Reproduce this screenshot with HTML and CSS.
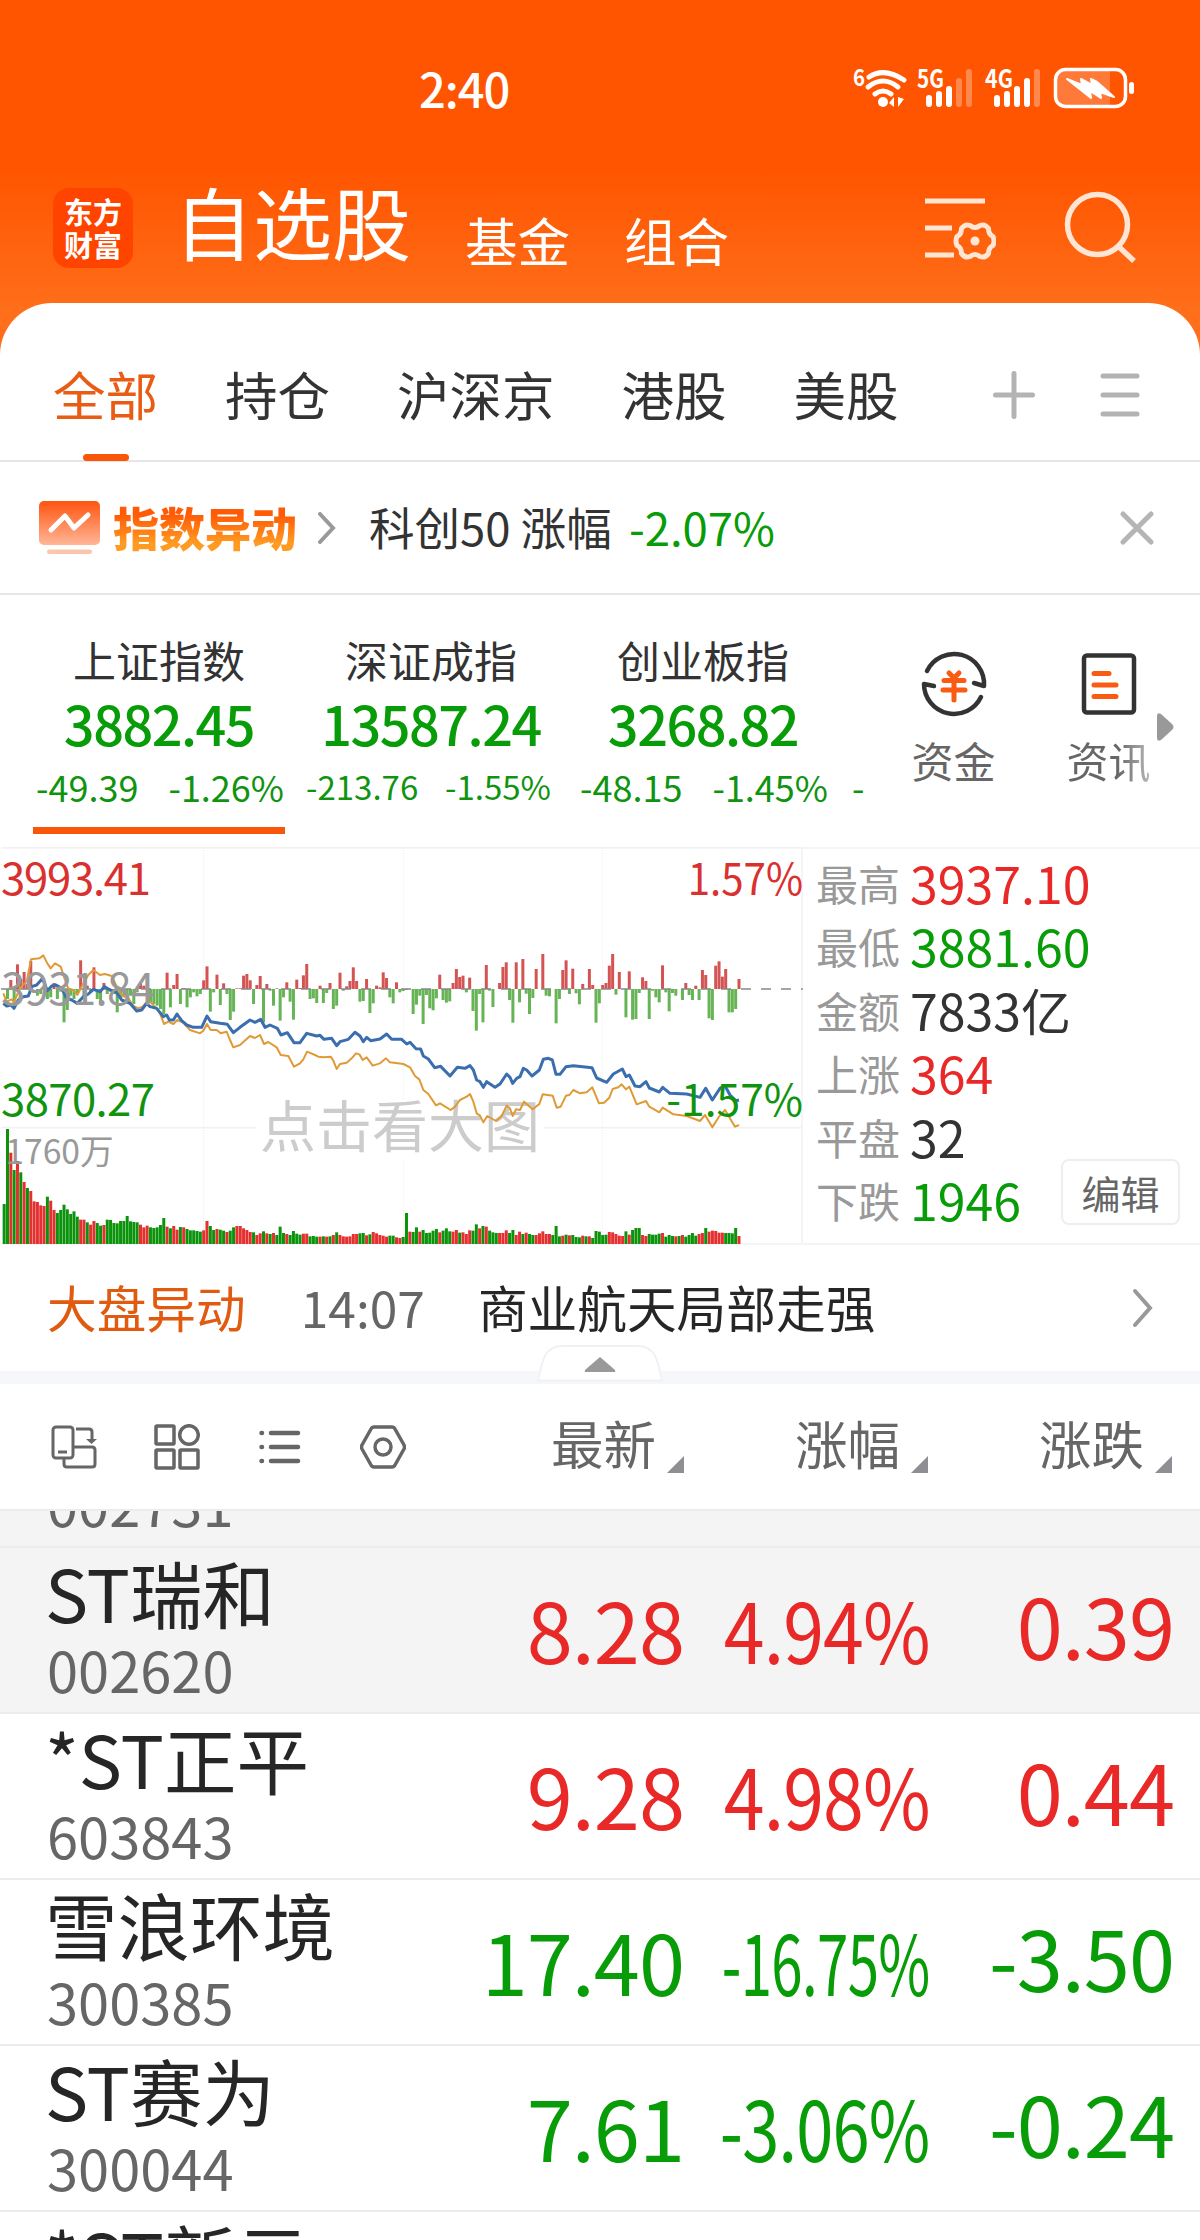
FILE: index.html
```
<!DOCTYPE html>
<html lang="zh-CN">
<head>
  <meta charset="UTF-8" />
  <meta name="viewport" content="width=device-width, initial-scale=1.0" />
  <title>自选股</title>
  <link rel="stylesheet" href="styles.css">
</head>
<body>
  <div class="app">
    <header class="top">
      <div class="status-bar">
        <span class="time">2:40</span>
        <svg class="status-icons" width="290" height="56" viewBox="850 60 290 56">
          <g fill="#fff" font-size="25" font-weight="700">
            <text x="853" y="86" font-size="23" textLength="12" lengthAdjust="spacingAndGlyphs">6</text>
            <text x="917" y="88" textLength="27" lengthAdjust="spacingAndGlyphs">5G</text>
            <text x="985" y="88" textLength="28" lengthAdjust="spacingAndGlyphs">4G</text>
          </g>
          <g fill="none" stroke="#fff" stroke-width="5" stroke-linecap="round">
            <path d="M869 77q15-10 35 3" />
            <path d="M868 87q15-12 30 0" />
            <path d="M875 94q8-6 16 0" />
          </g>
          <circle cx="883" cy="102" r="5" fill="#fff" />
          <path d="M894 97v10l-5-4zM898 97v10l6-8z" fill="#fff" />
          <g stroke="#fff" stroke-width="6" stroke-linecap="round">
            <path d="M929 98v6M939 94v10M949 89v15M997 98v6M1007 94v10M1017 89v15M1027 81v23" />
            <path d="M959 81v23M969 72v32M1037 72v32" opacity=".3" />
          </g>
          <path d="M1062 71h48v35h-48q-6 0-6-6v-23q0-6 6-6z" fill="#fff" opacity=".22" />
          <rect x="1055.500" y="69.500" width="70" height="37" rx="10" fill="none" stroke="#fff" stroke-width="3.500" />
          <rect x="1129" y="82" width="5" height="12" rx="2.500" fill="#fff" />
          <path d="M1067 79l15 6-1-6 11 6-1-6 6 3 17 15-14-5 1 6-11-7 1 7z" fill="#fff" stroke="#fff" stroke-width="2" stroke-linejoin="round" />
        </svg>
      </div>
      <div class="nav">
        <div class="logo">东方<br>财富</div>
        <h1 class="nav-main">自选股</h1>
        <span class="nav-link">基金</span>
        <span class="nav-link">组合</span>
        <svg class="nav-icon" width="76" height="70" viewBox="920 192 76 70">
          <g fill="none" stroke="#ffe5d3" stroke-width="5">
            <path d="M925 201h60M925 228h27M925 255h29" />
            <path d="M970 225.500q5 4 10 0q5-2 8.500 3q0 6 4.500 8q2 4.500 0 9q-4.500 2-4.500 8q-3.500 5-8.500 3q-5-4-10 0q-5 2-8.500-3q0-6-4.500-8q-2-4.500 0-9q4.500-2 4.500-8q3.500-5 8.500-3z" stroke-linejoin="round" />
          </g>
          <circle cx="975" cy="241" r="4.500" fill="#ffe5d3" />
        </svg>
        <svg class="nav-icon search" width="76" height="74" viewBox="1062 190 76 74">
          <g fill="none" stroke="#ffe5d3" stroke-width="5.500">
            <circle cx="1097.500" cy="224.500" r="30" />
            <path d="M1118 246l16 15" />
          </g>
        </svg>
      </div>
    </header>

    <main class="sheet">
      <nav class="tabs">
        <span class="tab active">全部</span>
        <span class="tab">持仓</span>
        <span class="tab">沪深京</span>
        <span class="tab">港股</span>
        <span class="tab">美股</span>
        <svg class="tab-plus" width="42" height="48" viewBox="0 0 42 48">
          <path d="M2.500 24h37M21 2.500v43" stroke="#b3b3b3" stroke-width="5" stroke-linecap="round" />
        </svg>
        <svg class="tab-menu" width="40" height="48" viewBox="0 0 40 48">
          <path d="M3 5h34M3 24h34M3 43h34" stroke="#b3b3b3" stroke-width="5" stroke-linecap="round" />
        </svg>
      </nav>

      <div class="alert">
        <svg width="62" height="54" viewBox="0 0 62 54">
          <defs>
            <linearGradient id="alert-bg" x1="0" y1="0" x2="0" y2="1">
              <stop offset="0" stop-color="#ff5410" />
              <stop offset="1" stop-color="#ffb697" />
            </linearGradient>
          </defs>
          <rect x="0" y="0" width="61" height="44" rx="5" fill="url(#alert-bg)" />
          <rect x="8" y="48.500" width="45" height="4.500" rx="2.200" fill="#fcc6ae" />
          <path d="M12 29l14-14 9 12 14-13" fill="none" stroke="#fff" stroke-width="5" stroke-linecap="round" stroke-linejoin="round" />
        </svg>
        <b class="alert-title">指数异动</b>
        <svg class="alert-arrow" width="18" height="32" viewBox="0 0 18 32">
          <path d="M2 2l13 14L2 30" fill="none" stroke="#999" stroke-width="4" stroke-linecap="round" />
        </svg>
        <span class="alert-text">科创50 涨幅 <i class="down">-2.07%</i></span>
        <svg class="alert-close" width="34" height="34" viewBox="0 0 34 34">
          <path d="M3 3l28 28M31 3L3 31" stroke="#b5b5b5" stroke-width="5" stroke-linecap="round" />
        </svg>
      </div>

      <section class="indices">
        <div class="cards">
          <div class="card active">
            <p class="card-name">上证指数</p>
            <p class="card-value">3882.45</p>
            <p class="card-change"><span>-49.39</span><span>-1.26%</span></p>
          </div>
          <div class="card">
            <p class="card-name">深证成指</p>
            <p class="card-value">13587.24</p>
            <p class="card-change small"><span>-213.76</span><span>-1.55%</span></p>
          </div>
          <div class="card">
            <p class="card-name">创业板指</p>
            <p class="card-value">3268.82</p>
            <p class="card-change"><span>-48.15</span><span>-1.45%</span></p>
          </div>
          <div class="card">
            <p class="card-name">&nbsp;</p>
            <p class="card-value">&nbsp;</p>
            <p class="card-change"><span>-</span></p>
          </div>
        </div>
        <div class="shortcut">
          <svg width="68" height="70" viewBox="0 0 68 70">
            <g fill="none" stroke="#333" stroke-width="4.500" stroke-linecap="round" stroke-linejoin="round">
              <path d="M7 22A30 30 0 0 1 64 37L54 34" />
              <path d="M61 48A30 30 0 0 1 4 35L14 37" />
            </g>
            <path d="M29 24l5 5 5-5M24 31.500h20M23 41h22M34 31v20" fill="none" stroke="#f95b12" stroke-width="5" stroke-linecap="round" />
          </svg>
          <span>资金</span>
        </div>
        <div class="shortcut">
          <svg width="56" height="70" viewBox="0 0 56 70">
            <rect x="3" y="6.500" width="50" height="57" rx="3" fill="none" stroke="#333" stroke-width="4.500" />
            <path d="M13 24.500h15M13 36h22M13 47.500h22" stroke="#f95b12" stroke-width="5" stroke-linecap="round" />
          </svg>
          <span class="fade">资讯</span>
        </div>
        <svg class="more" width="17" height="28" viewBox="0 0 17 28">
          <path d="M0 3q0-4 4-2l11 10q3 3 0 6L4 27q-4 2-4-2z" fill="#999" />
        </svg>
      </section>

      <section class="market">
        <svg class="chart" width="803" height="398" viewBox="0 21 2409 1194">
          <g class="grid">
            <path d="M4 23.500H2409M4 863H2406M4 1212H2406M2406 23V1212" stroke="#f2f2f2" stroke-width="5" />
            <path d="M611 30V1210M1210 30V1210M1807 30V1210" stroke="#e9e9e9" stroke-width="3" stroke-dasharray="3 5" />
          </g>
          <rect x="768" y="780" width="864" height="180" fill="#fff" />
          <text class="watermark" x="780" y="921">点击看大图</text>
          <g id="momentum"></g>
          <path d="M3 447H2409" stroke="#888" stroke-width="5" stroke-dasharray="30 30" />
          <g id="volume"></g>
          <polyline id="avg-line" />
          <polyline id="price-line" />
          <text class="mid" x="3" y="496" textLength="462">3931.84</text>
          <text class="up" x="3" y="165" textLength="450">3993.41</text>
          <text class="up" x="2063" y="165" textLength="346" lengthAdjust="spacingAndGlyphs">1.57%</text>
          <text class="down" x="3" y="828" textLength="462">3870.27</text>
          <text class="down" x="1999" y="828" textLength="410" lengthAdjust="spacingAndGlyphs">-1.57%</text>
          <text class="vol" x="16" y="972">1760万</text>
        </svg>
        <div class="stats">
          <p><label>最高</label><span class="up">3937.10</span></p>
          <p><label>最低</label><span class="down">3881.60</span></p>
          <p><label>金额</label><span>7833亿</span></p>
          <p><label>上涨</label><span class="up">364</span></p>
          <p><label>平盘</label><span>32</span></p>
          <p><label>下跌</label><span class="down">1946</span></p>
          <button class="edit">编辑</button>
        </div>
      </section>

      <div class="news">
        <span class="news-tag">大盘异动</span>
        <span class="news-time">14:07</span>
        <span class="news-title">商业航天局部走强</span>
        <svg class="news-arrow" width="22" height="40" viewBox="0 0 22 40">
          <path d="M3 3l15 17L3 37" fill="none" stroke="#999" stroke-width="4" stroke-linecap="round" />
        </svg>
        <svg class="handle" width="128" height="38" viewBox="0 0 128 38">
          <path d="M2 36.500C6 18 8 2 26 2H102C120 2 122 18 126 36.500z" fill="#fff" stroke="#f0f1f3" stroke-width="2" />
          <path d="M64 13L79 26q1 2-1 2H50q-2 0-1-2z" fill="#999" />
        </svg>
      </div>

      <div class="list-head">
        <div class="tools">
          <svg width="46" height="46" viewBox="0 0 46 46" fill="none" stroke="#666" stroke-width="3">
            <rect x="2" y="3" width="20" height="31" rx="3" />
            <path d="M7 28h9M13 35v5q0 3 3 3h25q3 0 3-3V26q0-3-3-3H23M25 5h13q3 0 3 3v9" />
            <path d="M35 15h11l-5.500 5z" fill="#666" stroke="none" />
          </svg>
          <svg width="46" height="46" viewBox="0 0 46 46" fill="none" stroke="#666" stroke-width="3.500">
            <rect x="2" y="2" width="18" height="18" rx="1" />
            <circle cx="35" cy="11" r="9.300" />
            <rect x="2" y="26" width="18" height="18" rx="1" />
            <rect x="26" y="26" width="18" height="18" rx="1" />
          </svg>
          <svg width="46" height="46" viewBox="0 0 46 46" stroke="#666" stroke-width="4.500" stroke-linecap="round">
            <path d="M4.500 9h.5M4.500 23h.5M4.500 37h.5M14 9h27M14 23h27M14 37h27" />
          </svg>
          <svg width="46" height="46" viewBox="0 0 46 46" fill="none" stroke="#666" stroke-width="3.500" stroke-linejoin="round">
            <path d="M14 3h18q2 0 3 2l9 16q1 2 0 4l-9 16q-1 2-3 2H14q-2 0-3-2L2 25q-1-2 0-4l9-16q1-2 3-2z" />
            <circle cx="23" cy="23" r="8" />
          </svg>
        </div>
        <span class="sort">最新</span>
        <span class="sort">涨幅</span>
        <span class="sort">涨跌</span>
      </div>

      <div class="list">
        <div class="row pinned first">
          <div class="stock"><span class="name">ST萃华</span><span class="code">002731</span></div>
        </div>
        <div class="row pinned up">
          <div class="stock"><span class="name">ST瑞和</span><span class="code">002620</span></div>
          <span class="price">8.28</span>
          <span class="pct"><i>4.94%</i></span>
          <span class="diff">0.39</span>
        </div>
        <div class="row up">
          <div class="stock"><span class="name">*ST正平</span><span class="code">603843</span></div>
          <span class="price">9.28</span>
          <span class="pct"><i>4.98%</i></span>
          <span class="diff">0.44</span>
        </div>
        <div class="row down">
          <div class="stock"><span class="name">雪浪环境</span><span class="code">300385</span></div>
          <span class="price">17.40</span>
          <span class="pct tight"><i>-16.75%</i></span>
          <span class="diff">-3.50</span>
        </div>
        <div class="row down">
          <div class="stock"><span class="name">ST赛为</span><span class="code">300044</span></div>
          <span class="price">7.61</span>
          <span class="pct mid-tight"><i>-3.06%</i></span>
          <span class="diff">-0.24</span>
        </div>
        <div class="row">
          <div class="stock"><span class="name">*ST新元</span></div>
        </div>
      </div>
    </main>
  </div>
  <script src="chart.js"></script>
</body>
</html>
```
FILE: styles.css
```
* {
  margin: 0;
  padding: 0;
  box-sizing: border-box;
}
body {
  background: #fff;
  color: #333;
  font-family: "Noto Sans CJK SC", "Noto Sans", sans-serif;
}
i {
  font-style: normal;
}
svg {
  display: block;
  flex: none;
}
.app {
  width: 1200px;
  height: 2240px;
  overflow: hidden;
  background: linear-gradient(#ff5500 170px, #ff6e1a 310px);
}
.up {
  color: #e92828;
  fill: #d93030;
}
.down {
  color: #089c08;
  fill: #109410;
}

/* header */
.top {
  height: 303px;
  color: #fff;
}
.status-bar {
  display: flex;
  align-items: center;
  height: 176px;
  padding-left: 419px;
}
.time {
  width: 431px;
  font-size: 47px;
  font-weight: 500;
  letter-spacing: -1px;
  line-height: 56px;
  padding-bottom: 1px;
}
.nav {
  display: flex;
  align-items: flex-start;
  padding-left: 53px;
}
.logo {
  width: 80px;
  height: 80px;
  margin-top: 12px;
  padding-top: 7px;
  border-radius: 16px;
  background: #ff4400;
  font-size: 29px;
  font-weight: 700;
  line-height: 33px;
  text-align: center;
}
.nav-main {
  margin: -7px 0 0 41px;
  font-size: 79px;
  font-weight: 400;
  line-height: 104px;
}
.nav-link {
  margin: 31px 0 0 54px;
  font-size: 52.5px;
  line-height: 64px;
}
.nav-main + .nav-link {
  margin-left: 54px;
}
.nav-icon {
  margin: 16px 0 0 191px;
}
.search {
  margin: 14px 0 0 66px;
}

/* white panel */
.sheet {
  height: 1937px;
  border-radius: 52px 52px 0 0;
  background: #fff;
}
.tabs {
  display: flex;
  align-items: center;
  height: 159px;
  padding: 26px 0 0 53px;
  border-bottom: 2px solid #e6e6e6;
}
.tab {
  position: relative;
  margin-right: 67px;
  font-size: 52.5px;
  line-height: 131px;
  padding-bottom: 2px;
}
.tab.active {
  color: #e95c14;
}
.tab.active::after {
  content: "";
  position: absolute;
  left: 30px;
  bottom: 0;
  width: 46px;
  height: 7px;
  border-radius: 4px;
  background: #fa560a;
}
.tab-plus {
  margin-left: 27px;
}
.tab-menu {
  margin-left: 65px;
}
.alert {
  display: flex;
  align-items: center;
  height: 133px;
  padding: 0 46px 0 39px;
  border-bottom: 2px solid #e6e6e6;
}
.alert-title {
  margin-left: 12px;
  padding-bottom: 4px;
  background: linear-gradient(#ff5a05 30%, #ff9a22 72%);
  -webkit-background-clip: text;
  background-clip: text;
  color: transparent;
  font-size: 46px;
  font-weight: 900;
  line-height: 64px;
}
.alert-arrow {
  margin-left: 21px;
}
.alert-text {
  margin-left: 33px;
  padding-bottom: 4px;
  font-size: 45.5px;
  line-height: 60px;
}
.alert-text i {
  margin-left: 7px;
}
.alert-close {
  margin-left: auto;
}

/* index cards */
.indices {
  display: flex;
  height: 252px;
  padding-left: 23px;
}
.cards {
  display: flex;
  width: 843px;
  overflow: hidden;
}
.card {
  flex: 0 0 272px;
  height: 239px;
  padding: 34px 10px 0;
  text-align: center;
}
.card.active {
  background: linear-gradient(#fa560a, #fa560a) 10px 100% / 252px 7px no-repeat;
}
.card-name {
  font-size: 43px;
  line-height: 60px;
}
.card-value {
  color: #089c08;
  font-size: 54px;
  font-weight: 500;
  letter-spacing: -1.5px;
  line-height: 68px;
  white-space: nowrap;
}
.card-change {
  display: flex;
  justify-content: space-between;
  padding: 0 1px 0 3px;
  color: #109410;
  font-size: 36px;
  line-height: 58px;
}
.card-change.small {
  padding: 0 6px 0 1px;
  font-size: 33px;
}
.shortcut {
  display: flex;
  flex-direction: column;
  align-items: center;
  width: 155px;
  padding-top: 54px;
  color: #666;
  font-size: 42px;
  line-height: 60px;
}
.cards + .shortcut {
  margin-left: 10px;
}
.shortcut span {
  margin-top: 11px;
}
.fade {
  background: linear-gradient(90deg, #666 60%, #bbb);
  -webkit-background-clip: text;
  background-clip: text;
  color: transparent;
}
.more {
  margin: 118px 0 0 -29px;
}

/* minute chart and side figures */
.market {
  display: flex;
  height: 398px;
}
.chart text {
  font-size: 131px;
}
.chart .mid,
.chart .vol {
  fill: #999;
}
.chart .vol {
  font-size: 101px;
}
.chart .watermark {
  fill: #ccc;
  font-size: 168px;
}
#price-line,
#avg-line {
  fill: none;
  stroke: #3a6eae;
  stroke-width: 9;
  stroke-linejoin: round;
}
#avg-line {
  stroke: #e09a35;
  stroke-width: 6;
}
.stats {
  position: relative;
  flex: 1;
  padding: 2px 0 0 13px;
  border-top: 2px solid #f4f4f4;
  border-bottom: 2px solid #f4f4f4;
}
.stats p {
  display: flex;
  height: 63.4px;
  font-size: 50px;
  line-height: 63px;
}
.stats label {
  width: 94px;
  color: #999;
  font-size: 42px;
}
.edit {
  position: absolute;
  right: 20px;
  bottom: 18px;
  width: 119px;
  height: 66px;
  border: 2px solid #eee;
  border-radius: 8px;
  background: #fff;
  color: #666;
  font: 39px/58px "Noto Sans CJK SC", sans-serif;
}

/* news line */
.news {
  position: relative;
  display: flex;
  align-items: center;
  height: 139px;
  padding: 0 46px 4px 47px;
  border-bottom: 13px solid #f5f7fa;
  font-size: 49.7px;
  line-height: 70px;
}
.news-tag {
  color: #e05a10;
}
.news-time {
  margin-left: 55px;
  color: #666;
}
.news-title {
  margin-left: 53px;
  color: #262626;
}
.news-arrow {
  margin: 4px 0 0 auto;
}
.handle {
  position: absolute;
  left: 536px;
  bottom: -11px;
}

/* stock list */
.list-head,
.row {
  display: grid;
  grid-template-columns: 1fr 240px 244px 244px;
  padding: 0 26px 0 47px;
}
.list-head {
  height: 127px;
  align-items: center;
  border-bottom: 2px solid #ececec;
}
.tools {
  display: flex;
  gap: 57px;
  padding-left: 4px;
}
.sort {
  display: flex;
  justify-content: flex-end;
  color: #666;
  font-size: 52.5px;
  line-height: 70px;
  padding-bottom: 9px;
}
.sort::after {
  content: "";
  align-self: flex-end;
  margin: 0 2px 4px 11px;
  border-left: 17px solid transparent;
  border-bottom: 17px solid #8e8e93;
}
.list {
  height: 730px;
  overflow: hidden;
}
.row {
  height: 166px;
  border-bottom: 2px solid #ececec;
}
.row.first {
  margin-top: -129px;
}
.pinned {
  background: #f4f4f4;
}
.stock {
  display: flex;
  flex-direction: column;
  padding-top: 4px;
}
.name {
  margin-left: -2px;
  color: #262626;
  font-size: 72.5px;
  line-height: 80px;
  white-space: nowrap;
}
.code {
  color: #666;
  font-size: 56px;
  line-height: 74px;
}
.price,
.pct,
.diff {
  display: flex;
  justify-content: flex-end;
  padding-top: 30px;
  font-size: 83px;
  letter-spacing: -1px;
  line-height: 100px;
}
.price {
  padding-right: 2px;
}
.diff {
  padding-top: 26px;
}
.pct i {
  transform: scaleX(0.885);
  transform-origin: right;
}
.pct.mid-tight i {
  transform: scaleX(0.805);
}
.pct.tight i {
  transform: scaleX(0.68);
}
```
FILE: chart.js
```
const SVG = 'http://www.w3.org/2000/svg';
const STEP = 9.975;

// minute momentum, above / below the zero line
const momentum = [
  0, -30, 27, -40, 74, 30, 51, 15, 84, 0, -20, -15, 8, -30, -25, 18, -30, -8, -100, -63,
  -20, -30, -15, 86, -20, 10, -12, 65, -30, -40, 18, -15, -5, -15, -70, -30, -25, -35, -20, -45,
  -10, 15, 10, 40, -40, -45, -50, -60, -75, 49, -55, 12, 45, -45, 3, -55, -25, -10, -22, -15,
  26, 68, -68, -10, 43, -48, 17, -15, -93, -68, 2, 2, 40, 45, 26, -45, 12, 39, -100, 15,
  -5, -50, 2, -95, -25, 20, -38, -92, 28, 3, 41, 75, -30, -28, -42, 10, -42, -12, 18, -60,
  -50, 49, -5, 8, 24, 65, 24, -38, -36, 30, -72, -43, 10, 5, 50, 33, -25, -43, 20, -10,
  -6, -3, 0, -75, -47, -20, -105, -18, -58, -64, -28, 43, -33, -41, -37, 18, 60, 36, 40, -10,
  34, -66, -125, -15, -100, 72, -5, -54, 0, 18, 66, 80, -33, -101, 80, -40, 90, -14, -75, -27,
  60, 0, 105, -20, -22, 0, -103, -30, 57, 86, -15, 61, -13, -46, 15, 0, 60, 12, -101, -43,
  12, 18, 70, 105, -17, 51, 0, -85, 53, -92, -90, -12, 35, 24, -90, -5, -25, -40, 71, -10,
  -67, -12, -20, 0, -33, 18, -18, -33, 10, -33, 57, 42, -88, -93, 70, 83, 37, 60, -70, -70, -60, 30
];

// minute volume, negative = falling minute
const volume = [
  -120, -345, 274, -222, 249, -215, 186, -168, 159, 128, 126, 116, 114, -142, 130, 102, -93, -102, -118, -104,
  -90, -98, -82, 73, 73, -65, 58, 69, -63, -55, 57, -73, -72, -63, -62, -69, -69, -84, -68, -66,
  -65, 58, 50, 55, -50, -48, -50, -57, -78, 52, -47, 54, 43, -51, 50, -45, -41, -41, -39, -37,
  41, 69, -54, -42, 45, -43, -40, 36, -40, -50, 54, 54, 47, 42, 36, -35, 27, 32, -38, 32,
  -30, 33, -27, -52, -33, 30, -27, -39, -31, -28, 31, 31, -23, -24, -22, 22, -23, 22, -23, 27,
  -35, 27, 23, 22, 23, 30, 30, -32, -33, 26, -29, 36, 32, 27, 25, 22, -25, -25, 20, 18,
  -21, -93, 37, -36, -50, 37, -42, -33, -34, -40, -45, 35, -40, -47, -38, 37, 42, -34, 35, 30,
  41, -40, -59, 47, -54, 52, -40, -35, -33, 33, 33, 41, -33, -42, 27, 37, -30, 34, -30, -27,
  27, 32, 38, 30, 30, -27, -54, -23, 25, -28, 26, -27, -21, -20, 25, -23, 23, -18, -39, -37,
  -27, -28, 36, 35, 30, 25, 24, -38, 28, -42, -48, -48, 27, 24, -30, -28, -28, -31, 33, -22,
  -27, -24, 23, -24, 27, -22, -27, -33, -25, 30, 33, -48, 37, 40, 39, 34, 34, -33, -33, -32, -48, 24
];

const price = '10,490 20,498 33,495 42,505 55,480 70,470 85,468 95,440 110,435 128,415 142,452 155,438 168,435 185,445 200,475 215,480 232,490 250,470 265,462 280,448 300,455 313,440 330,450 350,458 365,480 390,490 410,513 425,510 440,490 450,500 470,505 490,530 500,525 508,540 520,540 531,522 545,542 560,555 580,562 605,562 621,528 632,545 660,550 682,553 700,578 720,562 750,540 765,547 782,538 795,562 810,555 832,565 843,585 862,578 882,608 900,608 920,580 950,588 960,586 972,598 995,595 1010,617 1020,605 1045,598 1065,577 1080,588 1090,605 1100,592 1112,602 1140,597 1160,582 1175,598 1205,598 1220,612 1230,607 1248,626 1262,627 1270,648 1285,657 1304,683 1322,679 1350,708 1372,682 1395,685 1410,677 1420,690 1430,720 1440,725 1450,742 1460,725 1485,742 1500,732 1520,702 1530,712 1538,730 1550,715 1560,710 1570,685 1580,690 1596,708 1618,690 1630,658 1645,655 1657,660 1668,703 1680,703 1698,680 1720,677 1776,683 1790,714 1820,727 1840,702 1867,687 1878,710 1888,705 1905,738 1920,740 1938,725 1948,744 1978,756 1988,742 2010,760 2060,762 2100,772 2117,745 2137,780 2160,745 2175,737 2190,765 2207,782 2217,780';
const average = '10,460 20,485 35,478 42,487 55,455 68,435 80,425 93,358 118,355 130,346 142,370 152,385 165,370 182,380 195,420 205,445 220,450 232,465 250,430 265,405 280,390 300,405 315,402 335,408 350,440 365,465 385,475 400,498 415,505 428,500 445,480 470,505 480,520 492,552 505,545 520,552 532,540 550,548 570,570 600,580 610,572 621,552 632,570 650,570 662,580 680,575 690,600 700,622 720,615 750,588 765,594 780,585 792,612 805,606 830,622 842,645 865,648 882,680 900,670 910,658 921,635 945,645 955,650 972,652 992,650 1000,662 1010,687 1020,672 1040,668 1055,655 1068,640 1078,643 1088,660 1100,652 1118,677 1140,670 1158,655 1170,667 1210,672 1230,682 1245,708 1258,718 1270,750 1285,762 1308,796 1320,790 1352,810 1365,800 1380,780 1400,770 1410,762 1420,785 1430,820 1440,827 1450,847 1462,828 1488,843 1505,828 1520,797 1530,805 1538,828 1548,808 1560,810 1572,785 1598,808 1618,792 1628,763 1658,767 1670,803 1682,800 1698,767 1708,765 1720,750 1740,760 1760,757 1777,742 1797,790 1812,788 1828,773 1838,747 1855,742 1865,733 1878,748 1888,740 1910,793 1938,783 1948,800 1978,817 1988,803 2020,823 2060,828 2100,843 2115,825 2137,862 2157,830 2175,810 2205,860 2217,855';

function bar(group, i, y, h, color) {
  const rect = document.createElementNS(SVG, 'rect');
  rect.setAttribute('x', 8 + i * STEP);
  rect.setAttribute('y', y);
  rect.setAttribute('width', 9);
  rect.setAttribute('height', h);
  rect.setAttribute('fill', color);
  group.appendChild(rect);
}

const momentumGroup = document.getElementById('momentum');
momentum.forEach((v, i) => {
  if (v > 0) bar(momentumGroup, i, 447 - v, v, '#d45454');
  if (v < 0) bar(momentumGroup, i, 447, -v, '#66b456');
});

const volumeGroup = document.getElementById('volume');
volume.forEach((v, i) => {
  const h = Math.abs(v);
  bar(volumeGroup, i, 1212 - h, h, v > 0 ? '#e53030' : '#0c930c');
});

document.getElementById('price-line').setAttribute('points', price);
document.getElementById('avg-line').setAttribute('points', average);
```
